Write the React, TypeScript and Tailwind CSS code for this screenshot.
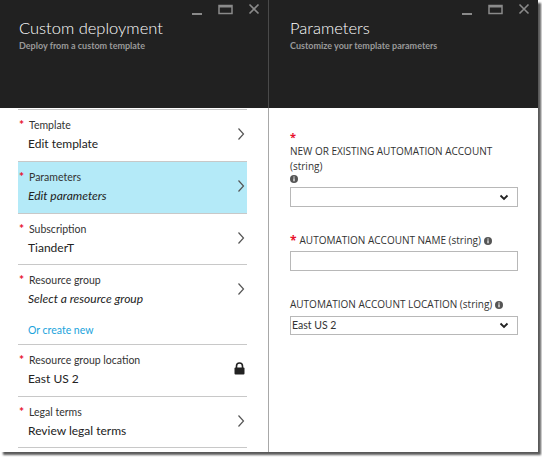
import React from "react";

const font = { fontFamily: 'Lato, "Open Sans", sans-serif' };
const os = { fontFamily: '"Open Sans", Lato, sans-serif' };

function WinControls() {
  return (
    <div className="flex items-start gap-[15px]">
      <svg width="12" height="16" viewBox="0 0 12 16">
        <rect x="1" y="11" width="10" height="2" fill="#8a8a8a" />
      </svg>
      <svg width="15" height="16" viewBox="0 0 15 16">
        <rect x="1" y="3.5" width="13" height="8" fill="none" stroke="#8a8a8a" strokeWidth="1.5" />
        <rect x="1" y="3" width="13" height="2.5" fill="#8a8a8a" />
      </svg>
      <svg width="12" height="16" viewBox="0 0 12 16">
        <path d="M1.5 2.5 L10.5 11.5 M10.5 2.5 L1.5 11.5" stroke="#8a8a8a" strokeWidth="1.6" />
      </svg>
    </div>
  );
}

function Header({ title, sub, pl }: { title: string; sub: string; pl: string }) {
  return (
    <div className={`h-[108px] bg-[#212121] relative pt-[17px] ${pl}`}>
      <div className="absolute right-[8px] top-[2px]">
        <WinControls />
      </div>
      <div className="text-[16.5px] leading-[22px] text-white font-light">{title}</div>
      <div className="text-[9px] leading-[12px] text-[#9a9a9a] font-bold mt-[1px]">{sub}</div>
    </div>
  );
}

function Chevron() {
  return (
    <svg width="8" height="14" viewBox="0 0 8 14">
      <path d="M1.5 1.5 L6.5 7 L1.5 12.5" fill="none" stroke="#555" strokeWidth="1.2" />
    </svg>
  );
}

function Lock() {
  return (
    <svg width="11" height="13" viewBox="0 0 11 13">
      <path d="M2.5 6 V4 a3 3 0 0 1 6 0 V6" fill="none" stroke="#222" strokeWidth="1.6" />
      <rect x="0.5" y="5.5" width="10" height="7" rx="1" fill="#222" />
    </svg>
  );
}

function Item({
  label,
  value,
  italic,
  active,
  icon,
  extra,
  h = 52,
}: {
  label: string;
  value: string;
  italic?: boolean;
  active?: boolean;
  icon?: React.ReactNode;
  extra?: React.ReactNode;
  h?: number;
}) {
  return (
    <div
      className={`border-b border-[#c8c8c8] ${active ? "bg-[#b4eaf8]" : ""}`}
      style={{ height: h }}
    >
      <div className="flex items-start pt-[8px] pl-[10px] pr-[2px]">
        <div className="flex-1">
          <div className="flex items-start text-[10.5px] leading-[15px] text-[#333]">
            <span className="text-[#e8112d] text-[12px] font-bold leading-[14px] w-[9px] -ml-[9px]">*</span>
            <span className="ml-[1px]">{label}</span>
          </div>
          <div
            className={`text-[12px] leading-[19px] text-[#222] mt-[1px] ${italic ? "italic" : ""}`}
          >
            {value}
          </div>
          {extra}
        </div>
        <div className="pt-[9px]">{icon ?? <Chevron />}</div>
      </div>
    </div>
  );
}

function Info() {
  return (
    <svg width="8" height="8" viewBox="0 0 8 8" className="inline-block shrink-0">
      <circle cx="4" cy="4" r="4" fill="#555" />
      <rect x="3.4" y="3.3" width="1.2" height="3" fill="#fff" />
      <rect x="3.4" y="1.5" width="1.2" height="1.1" fill="#fff" />
    </svg>
  );
}

function SelectChev() {
  return (
    <svg width="10" height="7" viewBox="0 0 10 7">
      <path d="M1.5 1.5 L5 5 L8.5 1.5" fill="none" stroke="#222" strokeWidth="1.8" />
    </svg>
  );
}

export default function App() {
  return (
    <div className="w-[542px] h-[457px] bg-white" style={font}>
      <div className="w-[538px] h-[452px] flex bg-white shadow-[3px_3px_2px_rgba(0,0,0,0.65)]">
        <div className="w-[268px] flex flex-col">
          <Header title="Custom deployment" sub="Deploy from a custom template" pl="pl-[19px]" />
          <div className="pl-[18px] pr-[21px]">
            <div className="h-[2px] border-b border-[#c8c8c8]" />
            <Item label="Template" value="Edit template" />
            <Item label="Parameters" value="Edit parameters" italic active />
            <Item label="Subscription" value="TianderT" h={51} />
            <Item
              label="Resource group"
              value="Select a resource group"
              italic
              h={80}
              extra={
                <div className="text-[10.5px] text-[#1aa3dc] mt-[15px] leading-[15px]">
                  Or create new
                </div>
              }
            />
            <Item label="Resource group location" value="East US 2" icon={<Lock />} />
            <Item label="Legal terms" value="Review legal terms" h={51} />
          </div>
        </div>
        <div className="w-[1px] flex flex-col">
          <div className="h-[108px] bg-[#4a4a4a]" />
          <div className="flex-1 bg-[#a8a8a8]" />
        </div>
        <div className="flex-1 flex flex-col">
          <Header title="Parameters" sub="Customize your template parameters" pl="pl-[21px]" />
          <div className="pl-[21px] pr-[20px] pt-[21px] text-[#333]" style={os}>
            <div className="text-[#e8112d] text-[11px] font-bold leading-[15px] h-[15px]">*</div>
            <div className="text-[10px] leading-[15px]">
              NEW OR EXISTING AUTOMATION ACCOUNT
              <br />
              (string)
            </div>
            <div className="h-[9px] flex items-center">
              <Info />
            </div>
            <div className="mt-[4px] h-[20px] border border-[#b8b8b8] flex items-center justify-end pr-[8px]">
              <SelectChev />
            </div>
            <div className="mt-[26px] text-[10px] leading-[15px] flex items-center gap-[3px]">
              <span className="text-[#e8112d] text-[12px] font-bold">*</span>
              <span>AUTOMATION ACCOUNT NAME (string)</span>
              <Info />
            </div>
            <div className="mt-[3px] h-[20px] border border-[#b8b8b8]" />
            <div className="mt-[26px] text-[10px] leading-[15px] flex items-center gap-[3px]">
              <span>AUTOMATION ACCOUNT LOCATION (string)</span>
              <Info />
            </div>
            <div
              className="mt-[4px] h-[19px] border border-[#b8b8b8] flex items-center justify-between pl-[1px] pr-[8px] text-[10.5px]"
              style={font}
            >
              <span>East US 2</span>
              <SelectChev />
            </div>
          </div>
        </div>
      </div>
    </div>
  );
}
